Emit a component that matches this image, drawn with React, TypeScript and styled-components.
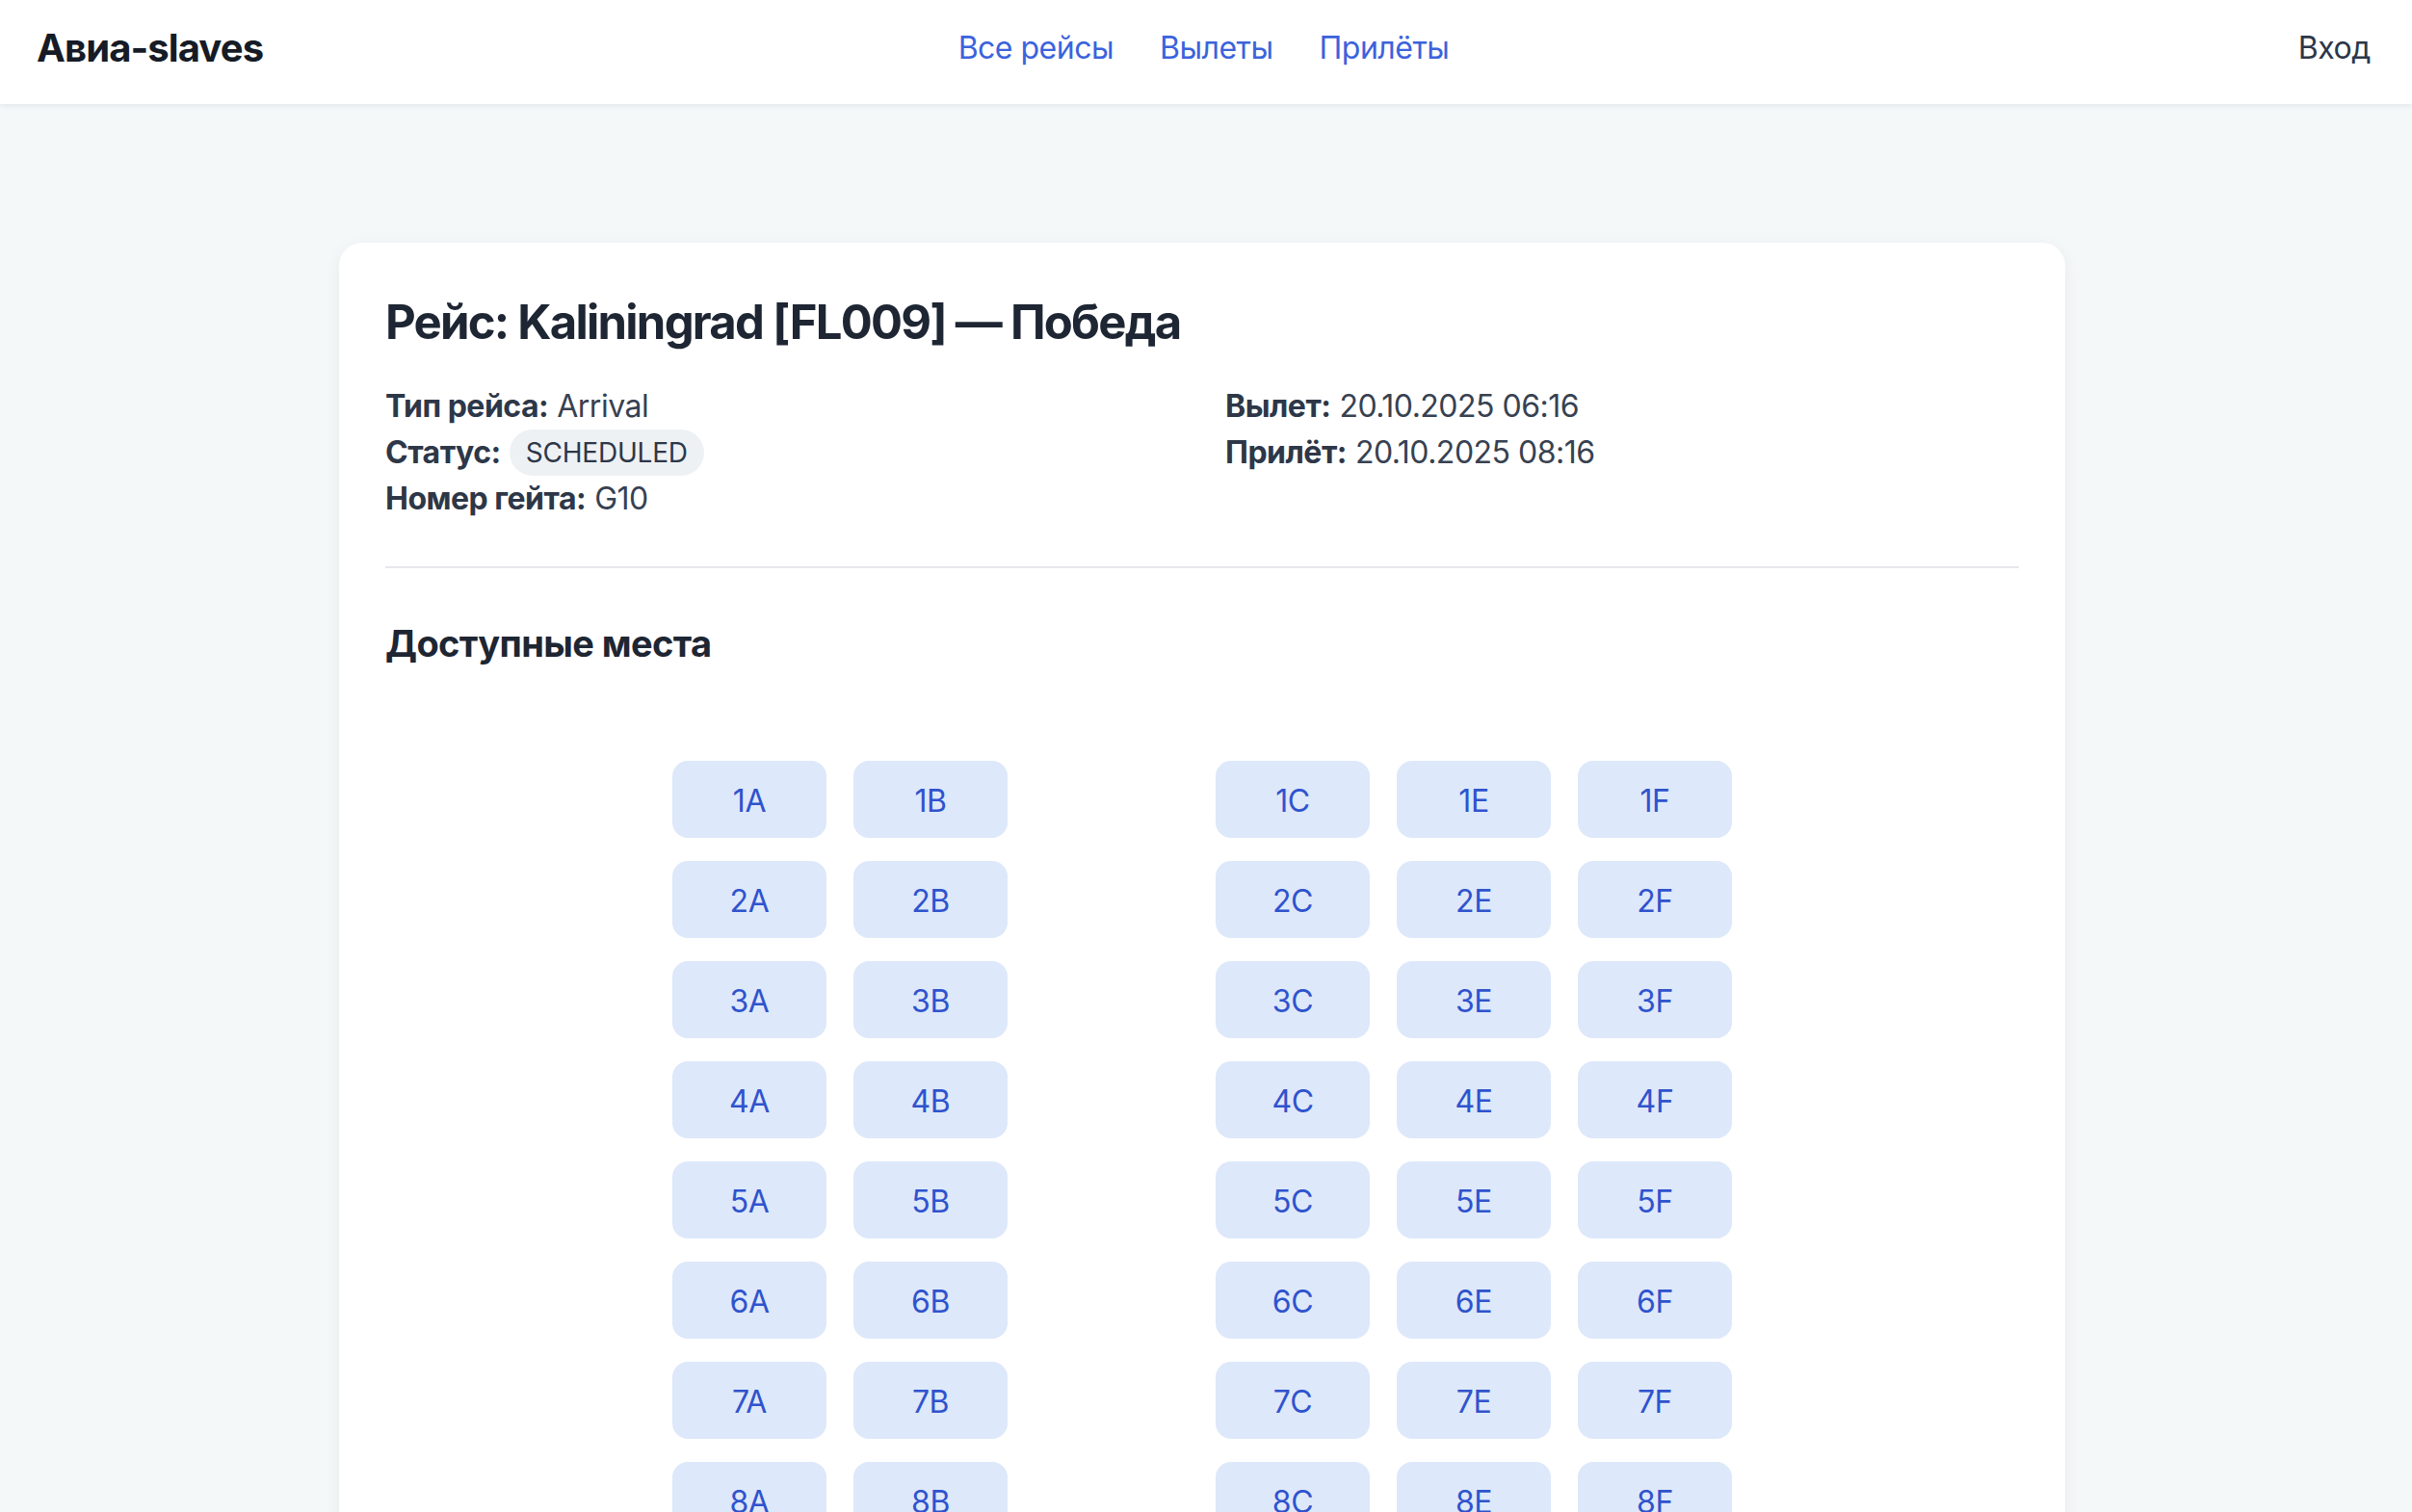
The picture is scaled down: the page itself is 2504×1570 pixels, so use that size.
import React from "react";
import styled, { createGlobalStyle } from "styled-components";

const GlobalStyle = createGlobalStyle`
  html, body {
    margin: 0;
    padding: 0;
    background: #f5f8f9;
    font-family: Inter, "Noto Sans", "Liberation Sans", sans-serif;
    color: #2d3748;
  }
  * { box-sizing: border-box; }
`;

const Header = styled.header`
  height: 108px;
  background: #ffffff;
  box-shadow: 0 2px 6px rgba(15, 23, 42, 0.08);
  display: grid;
  grid-template-columns: 1fr auto 1fr;
  align-items: center;
  padding: 0 43px 9px 38px;
  position: relative;
  z-index: 1;
`;

const Logo = styled.div`
  font-size: 40px;
  font-weight: 700;
  color: #161b26;
  letter-spacing: -0.9px;
`;

const Nav = styled.nav`
  display: flex;
  gap: 48px;
`;

const NavLink = styled.a`
  font-size: 32px;
  color: #3b63dc;
  text-decoration: none;
  letter-spacing: -0.5px;
  cursor: pointer;
`;

const Login = styled.a`
  justify-self: end;
  font-size: 32px;
  color: #2d3748;
  text-decoration: none;
  letter-spacing: -0.4px;
  cursor: pointer;
`;

const Main = styled.main`
  padding: 144px 8px 80px 0;
`;

const Card = styled.section`
  width: 1792px;
  margin: 0 auto;
  background: #ffffff;
  border-radius: 24px;
  box-shadow: 0 4px 18px rgba(15, 23, 42, 0.06);
  padding: 48px;
`;

const Title = styled.h1`
  margin: 0;
  font-size: 49px;
  line-height: 70px;
  font-weight: 700;
  color: #1e2633;
  letter-spacing: -1.75px;
`;

const InfoGrid = styled.div`
  margin-top: 28px;
  display: grid;
  grid-template-columns: 1fr 1fr;
  column-gap: 48px;
`;

const InfoColumn = styled.div`
  display: flex;
  flex-direction: column;
`;

const InfoLine = styled.div`
  font-size: 32px;
  line-height: 48px;
  color: #374151;
  letter-spacing: -0.5px;
  display: flex;
  align-items: center;
`;

const Label = styled.span`
  font-weight: 700;
  color: #2d3748;
  margin-right: 9px;
`;

const Badge = styled.span`
  display: inline-block;
  font-size: 28px;
  line-height: 48px;
  padding: 0 17px;
  border-radius: 999px;
  background: #eef1f4;
  color: #2d3748;
  letter-spacing: -0.2px;
`;

const Divider = styled.hr`
  border: none;
  height: 2px;
  background: #e6e8eb;
  margin: 46px 0 0;
`;

const SectionTitle = styled.h2`
  margin: 56px 0 0;
  font-size: 38px;
  line-height: 44px;
  font-weight: 700;
  color: #1e2633;
  letter-spacing: -0.6px;
`;

const SeatGrid = styled.div`
  margin: 100px auto 0;
  display: grid;
  grid-template-columns: repeat(6, 160px);
  column-gap: 28px;
  row-gap: 24px;
  justify-content: center;
`;

const Seat = styled.button`
  height: 80px;
  border: none;
  border-radius: 16px;
  background: #dde8fa;
  color: #2f53cd;
  font-family: inherit;
  font-size: 32px;
  line-height: 76px;
  letter-spacing: -0.4px;
  cursor: pointer;
  padding: 4px 0 0;
`;

const Aisle = styled.div``;

const rows = Array.from({ length: 10 }, (_, i) => i + 1);
const left = ["A", "B"];
const right = ["C", "E", "F"];

export default function App() {
  return (
    <>
      <GlobalStyle />
      <Header>
        <Logo>Авиа-slaves</Logo>
        <Nav>
          <NavLink>Все рейсы</NavLink>
          <NavLink>Вылеты</NavLink>
          <NavLink>Прилёты</NavLink>
        </Nav>
        <Login>Вход</Login>
      </Header>
      <Main>
        <Card>
          <Title>Рейс: Kaliningrad [FL009] — Победа</Title>
          <InfoGrid>
            <InfoColumn>
              <InfoLine>
                <Label>Тип рейса:</Label>Arrival
              </InfoLine>
              <InfoLine>
                <Label>Статус:</Label>
                <Badge>SCHEDULED</Badge>
              </InfoLine>
              <InfoLine>
                <Label>Номер гейта:</Label>G10
              </InfoLine>
            </InfoColumn>
            <InfoColumn>
              <InfoLine>
                <Label>Вылет:</Label>20.10.2025 06:16
              </InfoLine>
              <InfoLine>
                <Label>Прилёт:</Label>20.10.2025 08:16
              </InfoLine>
            </InfoColumn>
          </InfoGrid>
          <Divider />
          <SectionTitle>Доступные места</SectionTitle>
          <SeatGrid>
            {rows.map((r) => (
              <React.Fragment key={r}>
                {left.map((l) => (
                  <Seat key={l}>{`${r}${l}`}</Seat>
                ))}
                <Aisle />
                {right.map((l) => (
                  <Seat key={l}>{`${r}${l}`}</Seat>
                ))}
              </React.Fragment>
            ))}
          </SeatGrid>
        </Card>
      </Main>
    </>
  );
}
